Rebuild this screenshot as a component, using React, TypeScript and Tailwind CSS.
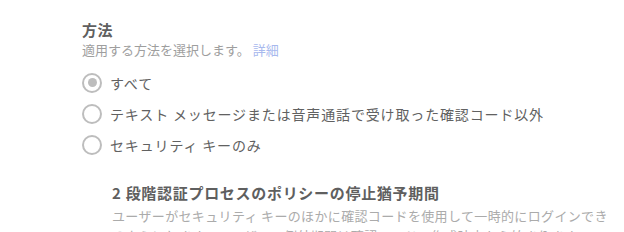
import React from "react";

const font = { fontFamily: '"Noto Sans CJK JP", "Noto Sans", sans-serif' };

function Radio({ checked, label }: { checked?: boolean; label: string }) {
  return (
    <div className="flex h-[31px] items-center">
      <span className="flex h-[20px] w-[20px] items-center justify-center rounded-full border-2 border-[#bdbdbd]">
        {checked && <span className="h-[9px] w-[9px] rounded-full bg-[#bdbdbd]" />}
      </span>
      <span className="ml-[8px] text-[14px] leading-[20px] tracking-[0.85px] text-[#616161]">{label}</span>
    </div>
  );
}

export default function App() {
  return (
    <div className="h-[232px] w-[624px] overflow-hidden bg-white" style={font}>
      <div className="pl-[82px] pt-[20px]">
        <div className="text-[15px] font-bold leading-[20px] tracking-[0.5px] text-[#5f5f5f]">方法</div>
        <div className="text-[13px] leading-[20px] text-[#9e9e9e]">
          適用する方法を選択します。 <span className="text-[#a8b9ee]">詳細</span>
        </div>
        <div className="mt-[7px] flex flex-col">
          <Radio checked label="すべて" />
          <Radio label="テキスト メッセージまたは音声通話で受け取った確認コード以外" />
          <Radio label="セキュリティ キーのみ" />
        </div>
      </div>
      <div className="mt-[23px] w-[502px] pl-[112px] box-content">
        <div className="text-[15px] font-bold leading-[20px] tracking-[0.7px] text-[#5f5f5f]">
          2 段階認証プロセスのポリシーの停止猶予期間
        </div>
        <div className="mt-[3px] text-[13px] leading-[20px] tracking-[0.35px] text-[#ababab]">
          ユーザーがセキュリティ キーのほかに確認コードを使用して一時的にログインできるようにします。ユーザーの例外期間は確認コードの作成時点から始まります。
        </div>
      </div>
    </div>
  );
}
